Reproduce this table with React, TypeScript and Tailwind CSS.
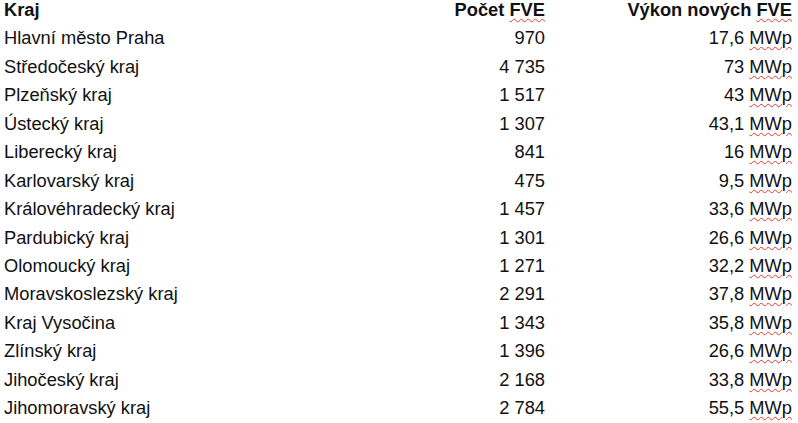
import React from 'react';

const rows: [string, string, string][] = [
  ['Hlavní město Praha', '970', '17,6'],
  ['Středočeský kraj', '4 735', '73'],
  ['Plzeňský kraj', '1 517', '43'],
  ['Ústecký kraj', '1 307', '43,1'],
  ['Liberecký kraj', '841', '16'],
  ['Karlovarský kraj', '475', '9,5'],
  ['Královéhradecký kraj', '1 457', '33,6'],
  ['Pardubický kraj', '1 301', '26,6'],
  ['Olomoucký kraj', '1 271', '32,2'],
  ['Moravskoslezský kraj', '2 291', '37,8'],
  ['Kraj Vysočina', '1 343', '35,8'],
  ['Zlínský kraj', '1 396', '26,6'],
  ['Jihočeský kraj', '2 168', '33,8'],
  ['Jihomoravský kraj', '2 784', '55,5'],
];

function Squiggle({ children }: { children: React.ReactNode }) {
  return (
    <span className="underline decoration-wavy decoration-[#e0392e] decoration-[1.2px] underline-offset-[2px]">
      {children}
    </span>
  );
}

export default function App() {
  return (
    <div className="w-[798px] h-[423px] bg-white text-[#111] overflow-hidden pl-[4px]" style={{ fontFamily: '"Liberation Sans", Arial, sans-serif' }}>
      <div className="grid grid-cols-[341px_200px_247px] text-[18.3px] leading-[20px]">
        <div className="h-[28.45px] font-bold">Kraj</div>
        <div className="h-[28.45px] font-bold text-right">
          Počet <Squiggle>FVE</Squiggle>
        </div>
        <div className="h-[28.45px] font-bold text-right">
          Výkon nových <Squiggle>FVE</Squiggle>
        </div>
        {rows.map(([name, count, power]) => (
          <React.Fragment key={name}>
            <div className="h-[28.45px]">{name}</div>
            <div className="h-[28.45px] text-right">{count}</div>
            <div className="h-[28.45px] text-right">
              {power} <Squiggle>MWp</Squiggle>
            </div>
          </React.Fragment>
        ))}
      </div>
    </div>
  );
}
